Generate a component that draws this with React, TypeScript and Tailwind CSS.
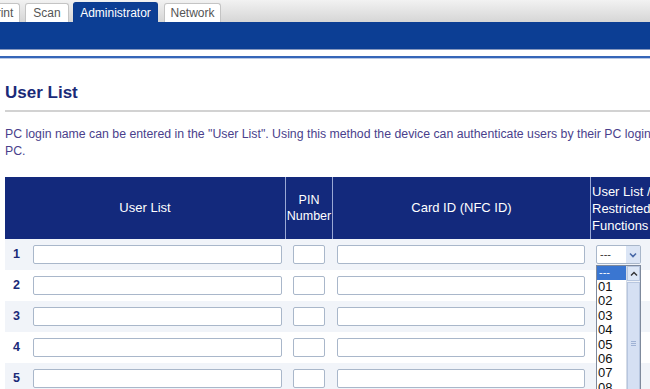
import React from 'react';

const rows = [1, 2, 3, 4, 5];
const options = ['01', '02', '03', '04', '05', '06', '07', '08'];

function Tab({ label, active, className }: { label: string; active?: boolean; className?: string }) {
  return (
    <div
      className={
        'flex items-center justify-center rounded-t-[3px] border border-b-0 px-2 text-[12px] ' +
        (active
          ? 'h-[20px] border-[#0b3c8f] bg-[#0c3e94] text-white'
          : 'h-[19px] border-[#c4c4c4] bg-white text-[#555]') +
        ' ' +
        (className ?? '')
      }
    >
      {label}
    </div>
  );
}

export default function App() {
  return (
    <div className="relative h-[389px] w-[650px] overflow-hidden bg-white font-['Liberation_Sans',Arial,sans-serif]">
      {/* tab strip */}
      <div className="flex h-[22px] items-end gap-[4px] bg-gradient-to-b from-[#f2f2f2] to-[#d6d6d6]">
        <Tab label="Print" className="ml-[-18px] w-[38px]" />
        <Tab label="Scan" className="ml-px w-[44px]" />
        <Tab label="Administrator" active className="w-[85px]" />
        <Tab label="Network" className="ml-[2px] w-[57px]" />
      </div>
      <div className="h-[27px] bg-[#0c3e94]" />
      <div className="h-px bg-[#8797bd]" />
      <div className="h-[6px]" />
      <div className="h-[2px] bg-[#3566b8]" />
      <div className="h-px bg-[#b9c9e6]" />

      <div className="pl-[5px]">
        <h1 className="mt-[24px] text-[17px] font-bold leading-[20px] text-[#1a2a78]">User List</h1>
        <div className="mt-[7px] h-[2px] bg-[#d2d2d2]" />
        <p className="mt-[14px] whitespace-nowrap text-[12.3px] leading-[17px] text-[#4a3f8c]">
          PC login name can be entered in the "User List". Using this method the device can authenticate users by their PC login name when printing from a
          <br />
          PC.
        </p>

        {/* table */}
        <div className="mt-[17px] grid w-[665px] grid-cols-[25px_255px_47px_258px_80px]">
          <div className="col-span-2 flex h-[62px] items-center justify-center bg-[#13297c] text-[13px] text-white">User List</div>
          <div className="flex h-[62px] flex-col items-center justify-center border-l border-[#9aa8d4] bg-[#13297c] text-[12.5px] leading-[16px] text-white">
            <span>PIN</span>
            <span>Number</span>
          </div>
          <div className="flex h-[62px] items-center justify-center border-l border-[#9aa8d4] bg-[#13297c] text-[13px] text-white">Card ID (NFC ID)</div>
          <div className="flex h-[62px] flex-col justify-center border-l border-[#9aa8d4] bg-[#13297c] pl-px text-[13px] leading-[17px] text-white">
            <span>User List /</span>
            <span>Restricted</span>
            <span>Functions</span>
          </div>

          {rows.map((n) => {
            const bg = n % 2 === 1 ? 'bg-[#f1f4f9]' : 'bg-white';
            return (
              <React.Fragment key={n}>
                <div className={'flex h-[31px] items-center pl-[8px] text-[12.5px] font-bold text-[#1a2a78] ' + bg}>{n}</div>
                <div className={'flex h-[31px] items-center pl-[3px] ' + bg}>
                  <div className="h-[19px] w-[249px] rounded-[2px] border border-[#a9b7ca] bg-white" />
                </div>
                <div className={'flex h-[31px] items-center pl-[8px] ' + bg}>
                  <div className="h-[19px] w-[32px] rounded-[2px] border border-[#a9b7ca] bg-white" />
                </div>
                <div className={'flex h-[31px] items-center pl-[5px] ' + bg}>
                  <div className="h-[19px] w-[248px] rounded-[2px] border border-[#a9b7ca] bg-white" />
                </div>
                <div className={'flex h-[31px] items-center pl-[6px] ' + bg}>
                  {n === 1 && (
                    <div className="flex h-[19px] w-[45px] items-center justify-between rounded-[2px] border border-[#a9b7ca] bg-white pl-[3px]">
                      <span className="text-[11px] leading-none text-[#333]">---</span>
                      <div className="flex h-full w-[14px] items-center justify-center bg-[#dbe5f5]">
                        <svg width="8" height="6" viewBox="0 0 8 6">
                          <path d="M1 1.5 L4 4.5 L7 1.5" fill="none" stroke="#4a6aa8" strokeWidth="1.6" />
                        </svg>
                      </div>
                    </div>
                  )}
                </div>
              </React.Fragment>
            );
          })}
        </div>
      </div>

      {/* open dropdown list */}
      <div className="absolute left-[596px] top-[265px] flex h-[140px] w-[45px] border border-[#7f8a9c] bg-white">
        <div className="flex flex-1 flex-col">
          <div className="h-[14px] bg-[#3a76d1] pl-[2px] text-[11px] leading-[12px] text-white">---</div>
          {options.map((o) => (
            <div key={o} className="h-[14.4px] pl-px text-[13px] leading-[14.4px] text-[#111]">
              {o}
            </div>
          ))}
        </div>
        <div className="flex w-[14px] flex-col border-l border-[#d4dbe6] bg-[#eef2f8]">
          <div className="flex h-[15px] items-center justify-center border border-[#b7c6df] bg-[#dde7f6]">
            <svg width="8" height="6" viewBox="0 0 8 6">
              <path d="M1 4.5 L4 1.5 L7 4.5" fill="none" stroke="#333" strokeWidth="1.4" />
            </svg>
          </div>
          <div className="mt-px flex flex-1 items-center justify-center border border-[#b7c6df] bg-[#d5e0f3]">
            <div className="flex flex-col gap-[1px]">
              <div className="h-px w-[5px] bg-[#9fb2d4]" />
              <div className="h-px w-[5px] bg-[#9fb2d4]" />
              <div className="h-px w-[5px] bg-[#9fb2d4]" />
            </div>
          </div>
        </div>
      </div>
    </div>
  );
}
